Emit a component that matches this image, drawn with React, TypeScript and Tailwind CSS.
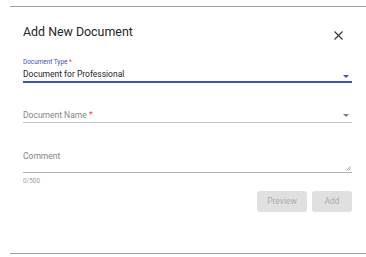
import React from "react";

function Arrow({ color }: { color: string }) {
  return (
    <svg width="6" height="3" viewBox="0 0 6 3" className="block">
      <path d="M0 0 L6 0 L3 3 Z" fill={color} />
    </svg>
  );
}

export default function App() {
  return (
    <div
      className="w-[366px] h-[257px] bg-white pt-[6px] pl-[10px] overflow-hidden"
      style={{ fontFamily: "Roboto, 'Liberation Sans', sans-serif" }}
    >
      <div className="h-[248px] border-t border-b border-[#9e9e9e] pl-[13px] pr-[14px] flex flex-col">
        {/* Header */}
        <div className="mt-[17px] flex justify-between items-start">
          <div className="text-[12.4px] leading-[16px] font-normal text-[#262626]">
            Add New Document
          </div>
          <div className="mt-[7px] mr-[9px]">
            <svg width="9" height="9" viewBox="0 0 9 9" className="block">
              <path d="M0.5 0.5 L8.5 8.5 M8.5 0.5 L0.5 8.5" stroke="#3a3a3a" strokeWidth="1.2" />
            </svg>
          </div>
        </div>

        {/* Document Type */}
        <div className="mt-[18px] text-[6.4px] leading-[8px] text-[#3f51b5]">
          Document Type <span className="text-[#f44336]">*</span>
        </div>
        <div className="mt-[2px] h-[12px] flex items-center justify-between">
          <span className="text-[8.5px] leading-[12px] text-[#262626]">Document for Professional</span>
          <span className="mr-[3px] mt-[4px]">
            <Arrow color="#3f51b5" />
          </span>
        </div>
        <div className="mt-[1px] h-[2px] bg-[#3f51b5]" />

        {/* Document Name */}
        <div className="mt-[26px] h-[12px] flex items-center justify-between">
          <span className="text-[8.5px] leading-[12px] text-[#858585]">
            Document Name <span className="text-[#f44336]">*</span>
          </span>
          <span className="mr-[3px]">
            <Arrow color="#7a7a7a" />
          </span>
        </div>
        <div className="mt-[1px] h-px bg-[#c4c4c4]" />

        {/* Comment */}
        <div className="mt-[27px] h-[12px] flex items-center">
          <span className="text-[8.5px] leading-[12px] text-[#858585]">Comment</span>
        </div>
        <div className="h-[10px] flex justify-end items-end">
          <svg width="5" height="5" viewBox="0 0 5 5" className="block mr-[1px] mb-[1px]">
            <path d="M0.5 4.5 L4.5 0.5 M2.5 4.5 L4.5 2.5" stroke="#8a8a8a" strokeWidth="0.8" />
          </svg>
        </div>
        <div className="h-px bg-[#b0b0b0]" />
        <div className="mt-[4px] text-[6.4px] leading-[8px] text-[#9e9e9e]">0/500</div>

        {/* Buttons */}
        <div className="mt-[6px] flex justify-end gap-[5px]">
          <div className="w-[50px] h-[21px] rounded-[3px] bg-[#e0e0e0] flex items-center justify-center text-[8.5px] font-normal text-[#ababab]">
            Preview
          </div>
          <div className="w-[40px] h-[21px] rounded-[3px] bg-[#e0e0e0] flex items-center justify-center text-[8.5px] font-normal text-[#ababab]">
            Add
          </div>
        </div>
      </div>
    </div>
  );
}
